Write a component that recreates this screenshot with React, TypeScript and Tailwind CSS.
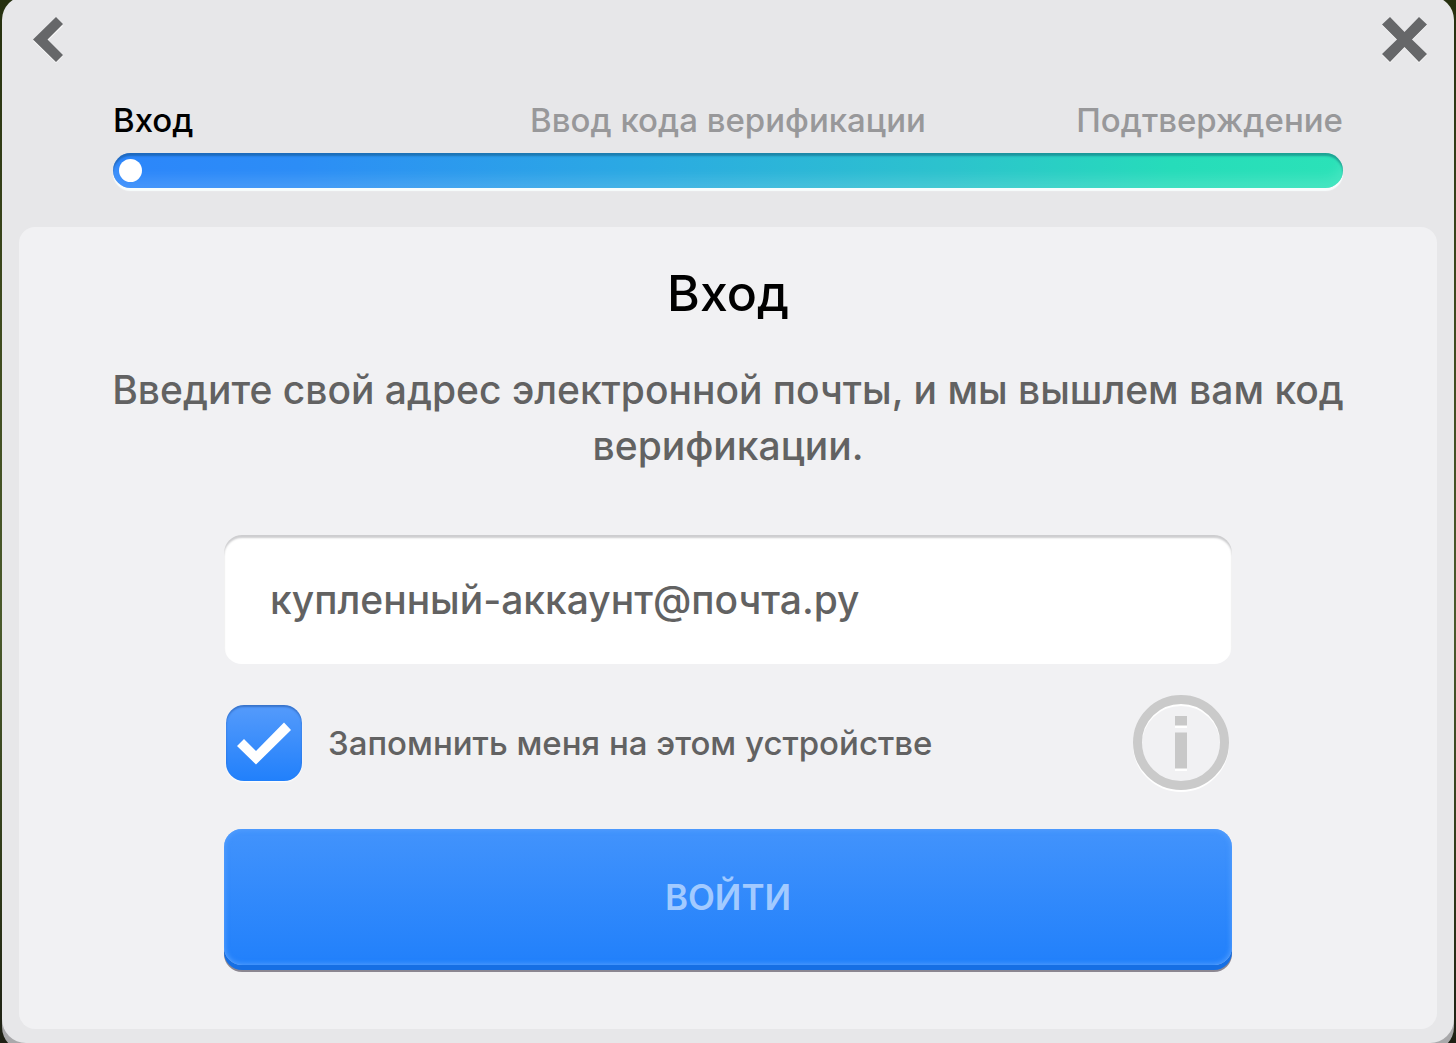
import { useState } from "react";

function BackIcon() {
  return (
    <svg viewBox="0 0 30 46" className="h-[46px] w-[30px]" aria-hidden="true">
      <path d="M23 2 30 9 14.500 24 30 39 23 46 0 24Z" fill="#fafafa" />
      <path d="M23 0 30 7 14.500 22.500 30 38 23 45 0 22.500Z" fill="#666769" />
    </svg>
  );
}

function CloseIcon() {
  const d = "M8 0 22.500 15 37 0 45 7.500 30 22.500 45 37 37 45 22.500 30 8 45 0 37 15 22.500 0 7.500Z";
  return (
    <svg viewBox="0 0 45 46" className="h-[46px] w-[45px]" aria-hidden="true">
      <path d={d} fill="#fafafa" transform="translate(0 1)" />
      <path d={d} fill="#666769" />
    </svg>
  );
}

function InfoIcon() {
  return (
    <svg viewBox="0 0 96 98" className="h-[98px] w-24" aria-hidden="true">
      <ellipse cx="48" cy="49.500" rx="43.500" ry="43" fill="none" stroke="#fff" strokeWidth="9" />
      <ellipse cx="48" cy="47.500" rx="43.500" ry="43" fill="none" stroke="#cacaca" strokeWidth="9" />
      <path d="M42 24h12v9h-12zM42 40h12v36h-12z" fill="#fff" />
      <path d="M42 21h12v9.500h-12zM42 37.500h12v36h-12z" fill="#c8c8c8" />
    </svg>
  );
}

export default function App() {
  const [email, setEmail] = useState("купленный-аккаунт@почта.ру");
  const [remember, setRemember] = useState(true);

  return (
    <div className="flex min-h-screen flex-col overflow-hidden bg-[linear-gradient(180deg,#26300f_0%,#3e4a1e_30%,#4a5a2c_60%,#2e3818_85%,#1e2014_100%)] px-0.5 font-[Inter,'Liberation_Sans',sans-serif] font-medium">
      <main className="-mt-1 flex flex-1 flex-col rounded-3xl bg-[#e7e7e9] px-[17px] pb-[14px] shadow-[0_8px_0_#a9a9ab]">
        <header className="flex items-start justify-between px-[14px] pt-[21px]">
          <button type="button" aria-label="Назад" className="cursor-pointer">
            <BackIcon />
          </button>
          <button type="button" aria-label="Закрыть" className="mr-[-4px] cursor-pointer">
            <CloseIcon />
          </button>
        </header>

        <section className="px-[94px] pt-[34px] pb-[39px]">
          <ol className="grid grid-cols-[1fr_auto_1fr] text-[33px] leading-[46px] text-[#98989a]">
            <li aria-current="step" className="text-black">Вход</li>
            <li>Ввод кода верификации</li>
            <li className="text-right">Подтверждение</li>
          </ol>
          <div className="mt-[10px] flex h-[35px] items-center rounded-full bg-[linear-gradient(90deg,#2c86fb_0%,#2c8df6_15%,#2ba9e3_42%,#2cc3cd_68%,#26dcba_86%,#2be2b8_100%)] px-1.5 shadow-[inset_0_3px_2px_rgba(0,50,80,0.35),inset_0_-10px_12px_rgba(255,255,255,0.12),0_3px_1px_#f8fdfd]">
            <span className="size-[23px] rounded-full bg-white" />
          </div>
        </section>

        <form
          onSubmit={(e) => e.preventDefault()}
          className="flex flex-1 flex-col rounded-2xl bg-[#f1f1f3] px-[80px] pt-[34px] pb-[56px] text-[#626262]"
        >
          <h1 className="text-center text-[50px] leading-[64px] text-black">Вход</h1>
          <p className="mt-[37px] text-center text-[39px] leading-[56px]">
            Введите свой адрес электронной почты, и мы вышлем вам код верификации.
          </p>

          <div className="mx-auto mt-[61px] w-full max-w-[1008px]">
            <input
              type="email"
              aria-label="Электронная почта"
              value={email}
              onChange={(e) => setEmail(e.target.value)}
              className="block h-[129px] w-full rounded-[18px] bg-white px-[46px] text-[39px] shadow-[inset_0_3px_2px_#cdcdcf] outline-none"
            />

            <div className="mt-[31px] flex items-start justify-between pr-[3px] pl-[2px]">
              <label className="mt-[10px] flex cursor-pointer items-center gap-[26px] text-[33px] leading-[46px]">
                <span className="relative size-[76px]">
                  <input
                    type="checkbox"
                    checked={remember}
                    onChange={(e) => setRemember(e.target.checked)}
                    className="block size-full appearance-none rounded-[18px] bg-[#d8d8da] shadow-[inset_0_2px_2px_rgba(0,40,110,0.35),0_1px_2px_#fff] checked:bg-[linear-gradient(180deg,#559bfb,#2180fb)]"
                  />
                  {remember && (
                    <svg viewBox="0 0 76 76" className="pointer-events-none absolute inset-0 size-full" aria-hidden="true">
                      <path d="M11 41 18 34 30 46 58 17.500 65 25 30 59.500Z" fill="#fff" />
                    </svg>
                  )}
                </span>
                Запомнить меня на этом устройстве
              </label>
              <button type="button" aria-label="Информация" className="cursor-pointer">
                <InfoIcon />
              </button>
            </div>

            <button
              type="submit"
              className="mt-9 block h-[136px] w-full cursor-pointer rounded-[18px] bg-[linear-gradient(180deg,#4293fc,#2180fb)] text-[35px] font-semibold text-[#a2caff] shadow-[inset_0_0_5px_1px_#559ffd,0_5px_0_#166fe4,0_7px_0_#8b8791]"
            >
              ВОЙТИ
            </button>
          </div>
        </form>
      </main>
    </div>
  );
}
